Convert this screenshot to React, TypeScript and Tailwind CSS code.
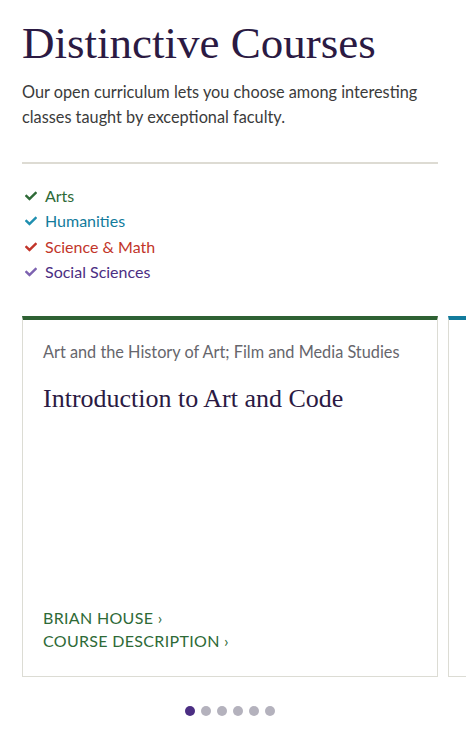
import React from "react"

const SERIF = { fontFamily: '"Liberation Serif", "Times New Roman", serif' }
const SANS = { fontFamily: 'Lato, "Open Sans", sans-serif' }

type Area = { label: string; text: string; check: string }

const AREAS: Area[] = [
  { label: "Arts", text: "text-[#2e6a37]", check: "text-[#2e6a37]" },
  { label: "Humanities", text: "text-[#127b9c]", check: "text-[#1f8fb0]" },
  { label: "Science & Math", text: "text-[#c2352a]", check: "text-[#c2352a]" },
  { label: "Social Sciences", text: "text-[#4b2e83]", check: "text-[#7d62b0]" },
]

function Check({ className }: { className: string }) {
  return (
    <svg viewBox="0 0 512 512" className={`h-[12px] w-[12px] ${className}`} fill="currentColor">
      <path d="M173.9 439.4 7.5 273c-10-10-10-26.2 0-36.2l36.2-36.2c10-10 26.2-10 36.2 0L192 312.7 432.1 72.6c10-10 26.2-10 36.2 0l36.2 36.2c10 10 10 26.2 0 36.2L210.1 439.4c-10 10-26.2 10-36.2 0z" />
    </svg>
  )
}

export default function App() {
  return (
    <div className="min-h-[741px] w-[466px] overflow-hidden bg-white" style={SANS}>
      <div className="w-[416px] pl-[22px] box-content pt-[19px]">
        <h1 className="text-[45px] leading-[48px] text-[#2b1a43]" style={SERIF}>
          Distinctive Courses
        </h1>
        <p className="mt-[12px] text-[16.3px] leading-[25px] text-[#3b3b3b]">
          Our open curriculum lets you choose among interesting classes taught by exceptional faculty.
        </p>
        <div className="mt-[33px] h-[2px] bg-[#dddbd3]" />
        <ul className="mt-[19px] flex flex-col">
          {AREAS.map((a) => (
            <li key={a.label} className="flex h-[25.5px] items-center gap-[8px] pl-[3px]">
              <Check className={a.check} />
              <span className={`text-[16px] ${a.text}`}>{a.label}</span>
            </li>
          ))}
        </ul>

        <div className="mt-[31px] flex gap-[10px]">
          <div className="flex h-[361px] w-[416px] shrink-0 flex-col border-x border-b border-[#dcdcd4] border-t-4 border-t-[#2e6133] px-[20px]">
            <div className="mt-[21px] text-[16.3px] leading-[22px] text-[#66666c]">
              Art and the History of Art; Film and Media Studies
            </div>
            <div className="mt-[20px] text-[26px] leading-[32px] text-[#2b1a43]" style={SERIF}>
              Introduction to Art and Code
            </div>
            <div className="mt-auto mb-[24px] flex flex-col text-[16px] leading-[23px] tracking-[0.02em] text-[#2e6a37] uppercase">
              <span>Brian House ›</span>
              <span>Course Description ›</span>
            </div>
          </div>
          <div className="h-[361px] w-[416px] shrink-0 border-x border-b border-[#dcdcd4] border-t-4 border-t-[#127b9c]" />
        </div>

        <div className="mt-[29px] flex justify-center gap-[6px]">
          {[0, 1, 2, 3, 4, 5].map((i) => (
            <span
              key={i}
              className={`h-[10px] w-[10px] rounded-full ${i === 0 ? "bg-[#4b2e83]" : "bg-[#b4b2bd]"}`}
            />
          ))}
        </div>
      </div>
    </div>
  )
}
